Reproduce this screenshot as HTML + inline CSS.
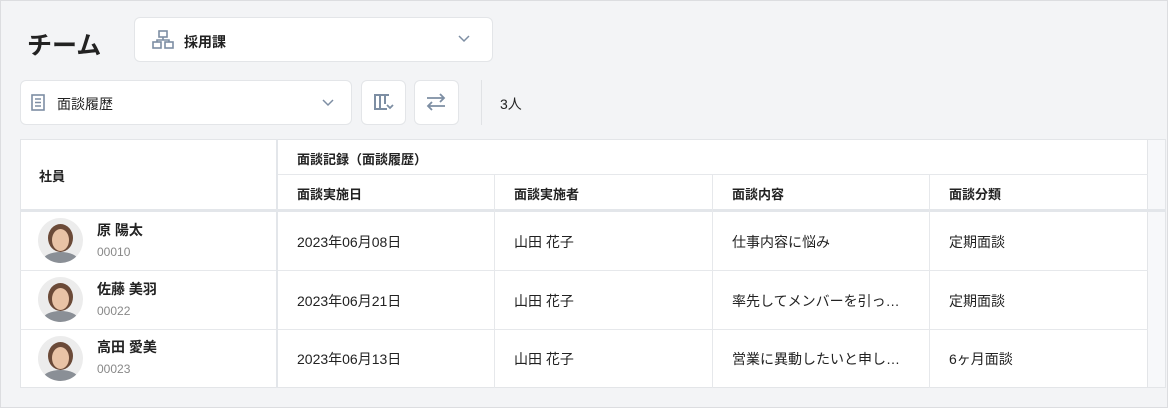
<!DOCTYPE html>
<html><head><meta charset="utf-8"><style>
*{box-sizing:border-box;margin:0;padding:0}
body{width:1168px;height:408px;background:#f3f4f6;font-family:"Liberation Sans","Noto Sans CJK JP",sans-serif;color:#222;position:relative;overflow:hidden}
.abs{position:absolute}
.box{position:absolute;background:#fff;border:1px solid #e3e5e8;border-radius:6px}
.t{position:absolute;font-size:14px;white-space:nowrap}
.b{font-weight:bold}
.g{color:#888;font-size:12px}
.vl{position:absolute;background:#e6e8eb;width:1px}
.hl{position:absolute;background:#e6e8eb;height:1px}
.av{position:absolute;width:45px;height:45px;border-radius:50%;background:#ececec;overflow:hidden}
.av i{position:absolute;left:10px;top:6px;width:25px;height:28px;border-radius:50%;background:#6b4a38}
.av u{position:absolute;left:14px;top:11px;width:17px;height:22px;border-radius:50%;background:#e9c3a6}
.av s{position:absolute;left:5px;top:34px;width:35px;height:16px;border-radius:50% 50% 0 0;background:#8a8f96}
</style></head><body>
<div class="abs" style="left:0;top:0;width:1168px;height:408px;border:1px solid #dcdde0"></div>
<div class="t b" style="left:27px;top:26px;font-size:25px">チーム</div>
<div class="box" style="left:134px;top:17px;width:359px;height:45px"></div>
<svg class="abs" style="left:152px;top:30px" width="22" height="20" viewBox="0 0 22 20" fill="none" stroke="#7d8ea3" stroke-width="1.6"><rect x="7" y="1" width="8" height="6"/><rect x="1" y="12" width="8" height="6"/><rect x="13" y="12" width="8" height="6"/><path d="M11 7v3M5 12v-2h12v2"/></svg>
<div class="t b" style="left:184px;top:32px">採用課</div>
<svg class="abs" style="left:458px;top:35px" width="12" height="8" viewBox="0 0 12 8" fill="none" stroke="#7d8ea3" stroke-width="1.5"><path d="M1 1l5 5 5-5"/></svg>

<div class="box" style="left:20px;top:80px;width:332px;height:45px"></div>
<svg class="abs" style="left:31px;top:94px" width="14" height="17" viewBox="0 0 14 17" fill="none" stroke="#7d8ea3" stroke-width="1.6"><rect x="1" y="1" width="12" height="15"/><path d="M4 5h6M4 8.5h6M4 12h6"/></svg>
<div class="t" style="left:57px;top:94px">面談履歴</div>
<svg class="abs" style="left:322px;top:99px" width="12" height="8" viewBox="0 0 12 8" fill="none" stroke="#7d8ea3" stroke-width="1.5"><path d="M1 1l5 5 5-5"/></svg>
<div class="box" style="left:361px;top:80px;width:45px;height:45px"></div>
<svg class="abs" style="left:372px;top:93px" width="24" height="20" viewBox="0 0 24 20" fill="none" stroke="#7d8ea3" stroke-width="2"><path d="M2 2h15M3 2v14h12M8 2v14M13 2v9"/><path d="M15 12l3 3 3-3" stroke-width="1.8"/></svg>
<div class="box" style="left:414px;top:80px;width:45px;height:45px"></div>
<svg class="abs" style="left:425px;top:93px" width="22" height="18" viewBox="0 0 22 18" fill="none" stroke="#7d8ea3" stroke-width="1.8"><path d="M2 5h17M15 1l4 4-4 4M20 13H3M7 9l-4 4 4 4"/></svg>
<div class="vl" style="left:481px;top:80px;height:45px;background:#e0e2e5"></div>
<div class="t" style="left:500px;top:94px;font-size:14px">3人</div>

<div class="abs" style="left:20px;top:139px;width:1146px;height:249px;background:#f7f8fa;border:1px solid #e3e5e8"></div>
<div class="abs" style="left:20px;top:139px;width:1128px;height:249px;background:#fff;border:1px solid #e3e5e8"></div>
<div class="hl" style="left:278px;top:174px;width:870px"></div>
<div class="abs" style="left:20px;top:209px;width:1146px;height:3px;background:#e3e6ea"></div>
<div class="hl" style="left:20px;top:270px;width:1128px"></div>
<div class="hl" style="left:20px;top:329px;width:1128px"></div>
<div class="abs" style="left:276px;top:139px;width:2px;height:249px;background:#e3e6ea"></div>
<div class="vl" style="left:494px;top:174px;height:214px"></div>
<div class="vl" style="left:712px;top:174px;height:214px"></div>
<div class="vl" style="left:929px;top:174px;height:214px"></div>

<div class="t b" style="left:39px;top:166px;font-size:13px">社員</div>
<div class="t b" style="left:297px;top:149px;font-size:13px">面談記録（面談履歴）</div>
<div class="t b" style="left:297px;top:184px;font-size:13px">面談実施日</div>
<div class="t b" style="left:514px;top:184px;font-size:13px">面談実施者</div>
<div class="t b" style="left:732px;top:184px;font-size:13px">面談内容</div>
<div class="t b" style="left:949px;top:184px;font-size:13px">面談分類</div>

<div class="av" style="left:38px;top:218px"><s></s><i></i><u></u></div>
<div class="t b" style="left:97px;top:220px">原 陽太</div>
<div class="t g" style="left:97px;top:245px">00010</div>
<div class="t" style="left:297px;top:232px">2023年06月08日</div>
<div class="t" style="left:514px;top:232px">山田 花子</div>
<div class="t" style="left:732px;top:232px">仕事内容に悩み</div>
<div class="t" style="left:949px;top:232px">定期面談</div>

<div class="av" style="left:38px;top:277px"><s></s><i></i><u></u></div>
<div class="t b" style="left:97px;top:279px">佐藤 美羽</div>
<div class="t g" style="left:97px;top:304px">00022</div>
<div class="t" style="left:297px;top:291px">2023年06月21日</div>
<div class="t" style="left:514px;top:291px">山田 花子</div>
<div class="t" style="left:732px;top:291px">率先してメンバーを引っ…</div>
<div class="t" style="left:949px;top:291px">定期面談</div>

<div class="av" style="left:38px;top:336px"><s></s><i></i><u></u></div>
<div class="t b" style="left:97px;top:337px">高田 愛美</div>
<div class="t g" style="left:97px;top:362px">00023</div>
<div class="t" style="left:297px;top:349px">2023年06月13日</div>
<div class="t" style="left:514px;top:349px">山田 花子</div>
<div class="t" style="left:732px;top:349px">営業に異動したいと申し…</div>
<div class="t" style="left:949px;top:349px">6ヶ月面談</div>
</body></html>
